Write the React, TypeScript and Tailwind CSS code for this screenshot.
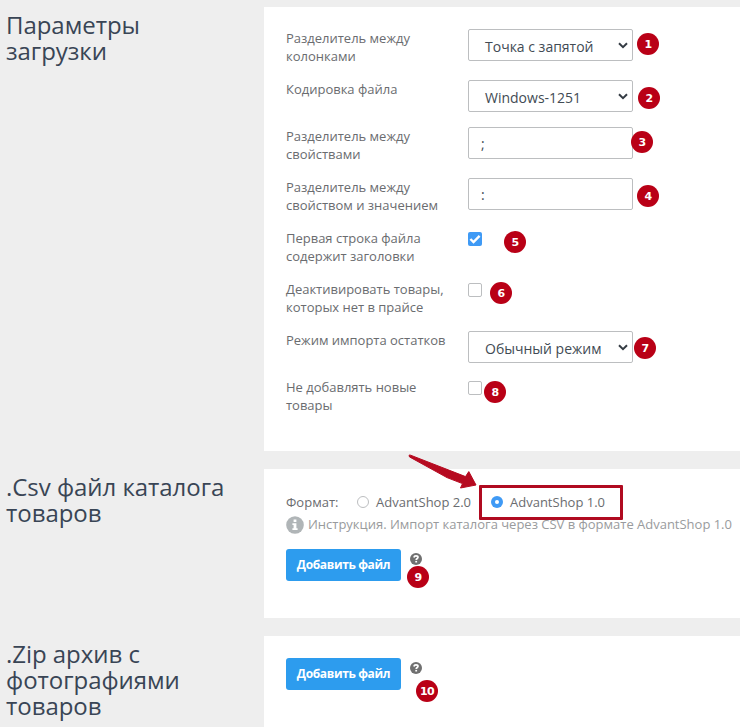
import type { ReactNode } from "react";

function Select({ value }: { value: string }) {
  return (
    <div className="flex h-8 w-[165px] items-center justify-between rounded-[2px] border border-[#bcbec0] bg-white pt-[3px] pr-[4px] pl-4 text-[14px] text-[#424b54]">
      <span className="whitespace-nowrap">{value}</span>
      <svg className="-mt-[2px]" width="10" height="7" viewBox="0 0 10 7" fill="none">
        <path d="M1 1.2 5 5.1 9 1.2" stroke="#343b43" strokeWidth="2" />
      </svg>
    </div>
  );
}

function Input({ value }: { value: string }) {
  return (
    <div className="flex h-8 w-[165px] items-center rounded-[2px] border border-[#bcbec0] bg-white pt-px pl-3 text-[14px] text-[#424b54]">
      {value}
    </div>
  );
}

function Checkbox({ checked = false }: { checked?: boolean }) {
  if (checked) {
    return (
      <div className="mt-[3px] flex size-[14px] items-center justify-center rounded-[2px] bg-[#3f9af5]">
        <svg width="14" height="14" viewBox="0 0 14 14" fill="none">
          <path d="M2.4 7 5.5 10 11.6 3.8" stroke="#fff" strokeWidth="2.4" />
        </svg>
      </div>
    );
  }
  return <div className="mt-[3px] size-[14px] rounded-[2px] border border-[#bcbec0] bg-white" />;
}

function Row({ lines, children }: { lines: string[]; children: ReactNode }) {
  return (
    <div className="flex items-start">
      <div className="w-[182px] text-[13px] leading-[18px] tracking-[-0.01px]">
        {lines.map((line) => (
          <div key={line} className="whitespace-nowrap">{line}</div>
        ))}
      </div>
      {children}
    </div>
  );
}

function Section({ title, height, children }: { title: string; height: string; children: ReactNode }) {
  return (
    <section className={"flex " + height}>
      <h2 className="w-[264px] shrink-0 pt-[5px] pl-[6px] text-[24px] leading-[26px] tracking-[-0.04px] whitespace-pre-line text-[#394555]">
        {title}
      </h2>
      <div className="min-w-0 flex-1 bg-white pl-[22px]">{children}</div>
    </section>
  );
}

function UploadButton() {
  return (
    <div className="flex items-start">
      <button className="h-8 w-[115px] rounded-[3px] bg-[#2d9cee] text-[12px] font-bold tracking-[-0.36px] whitespace-nowrap text-white">
        Добавить файл
      </button>
      <svg className="mt-[4px] ml-[9px]" width="12" height="12" viewBox="0 0 12 12">
        <circle cx="6" cy="6" r="6" fill="#707070" />
        <path d="M3.9 4.5C4.1 3.2 5 2.8 6 2.8c1.2 0 2 .6 2 1.5C8 5.5 6.2 5.5 6.2 7" fill="none" stroke="#fff" strokeWidth="1.7" />
        <rect x="5.3" y="7.9" width="1.8" height="1.6" fill="#fff" />
      </svg>
    </div>
  );
}

function Badge({ n, place }: { n: number; place: string }) {
  return (
    <div
      className={
        "absolute flex size-[22px] items-center justify-center rounded-full bg-[#b90016] font-['DejaVu_Sans',sans-serif] text-[11px] leading-none font-bold tracking-[-0.6px] text-white " +
        place
      }
    >
      {n}
    </div>
  );
}

export default function App() {
  return (
    <main className="relative flex h-[727px] w-[740px] flex-col gap-[18px] overflow-hidden bg-[#eeeeee] pt-[7px] font-['Open_Sans',sans-serif] text-[#6a6c6f]">
      <Section title={"Параметры\nзагрузки"} height="h-[444px] shrink-0">
        <div className="flex flex-col gap-[15px] pt-[22px]">
          <Row lines={["Разделитель между", "колонками"]}>
            <Select value="Точка с запятой" />
          </Row>
          <Row lines={["Кодировка файла"]}>
            <Select value="Windows-1251" />
          </Row>
          <Row lines={["Разделитель между", "свойствами"]}>
            <Input value=";" />
          </Row>
          <Row lines={["Разделитель между", "свойством и значением"]}>
            <Input value=":" />
          </Row>
          <Row lines={["Первая строка файла", "содержит заголовки"]}>
            <Checkbox checked />
          </Row>
          <Row lines={["Деактивировать товары,", "которых нет в прайсе"]}>
            <Checkbox />
          </Row>
          <Row lines={["Режим импорта остатков"]}>
            <Select value="Обычный режим" />
          </Row>
          <Row lines={["Не добавлять новые", "товары"]}>
            <Checkbox />
          </Row>
        </div>
      </Section>

      <Section title={".Csv файл каталога\nтоваров"} height="h-[149px] shrink-0">
        <div className="mt-[24px] flex h-[18px] items-center text-[13px] leading-[18px] whitespace-nowrap">
          <span className="-mt-px w-[71px]">Формат:</span>
          <span className="size-[12px] rounded-full border border-[#bcbec0]" />
          <span className="-mt-px ml-[7px] w-[115px]">AdvantShop 2.0</span>
          <span className="flex size-[12px] items-center justify-center rounded-full bg-[#3f9af5]">
            <span className="size-[4px] rounded-full bg-white" />
          </span>
          <span className="-mt-px ml-[7px]">AdvantShop 1.0</span>
        </div>
        <div className="mt-[5px] flex h-[18px] items-center text-[13px] tracking-[-0.01px] whitespace-nowrap text-[#999b9d]">
          <svg className="mr-[4px] shrink-0" width="18" height="18" viewBox="0 0 18 18">
            <circle cx="9" cy="9" r="8.8" fill="#b0b5b7" />
            <path d="M7.6 3.5h2.8v2.4H7.6zM6.4 7.2h4v5h1.2v1.8H6.4v-1.8h1.2V9H6.4z" fill="#fff" />
          </svg>
          Инструкция. Импорт каталога через CSV в формате AdvantShop 1.0
        </div>
        <div className="mt-[15px]">
          <UploadButton />
        </div>
      </Section>

      <Section title={".Zip архив с\nфотографиями\nтоваров"} height="flex-1">
        <div className="pt-[22px]">
          <UploadButton />
        </div>
      </Section>

      <div className="absolute top-[485px] left-[479px] h-[35px] w-[144px] rounded-[1px] border-[3px] border-[#b00a20]" />
      <svg className="absolute top-[450px] left-[404px]" width="80" height="42" viewBox="0 0 80 42">
        <path
          d="M5 5.4Q5.4 4.8 6.6 5.2L61.5 26.6 64.8 21.6 72 35 56.5 38 58.5 33.6 43 27.6 6 7.2Q4.6 6.3 5 5.4Z"
          fill="#b60a20"
          stroke="#b60a20"
          strokeLinejoin="round"
        />
      </svg>

      <Badge n={1} place="top-[33px] left-[637px]" />
      <Badge n={2} place="top-[87px] left-[638px]" />
      <Badge n={3} place="top-[131px] left-[631px]" />
      <Badge n={4} place="top-[185px] left-[637px]" />
      <Badge n={5} place="top-[231px] left-[504px]" />
      <Badge n={6} place="top-[282px] left-[490px]" />
      <Badge n={7} place="top-[337px] left-[634px]" />
      <Badge n={8} place="top-[381px] left-[484px]" />
      <Badge n={9} place="top-[566px] left-[407px]" />
      <Badge n={10} place="top-[680px] left-[416px]" />
    </main>
  );
}
